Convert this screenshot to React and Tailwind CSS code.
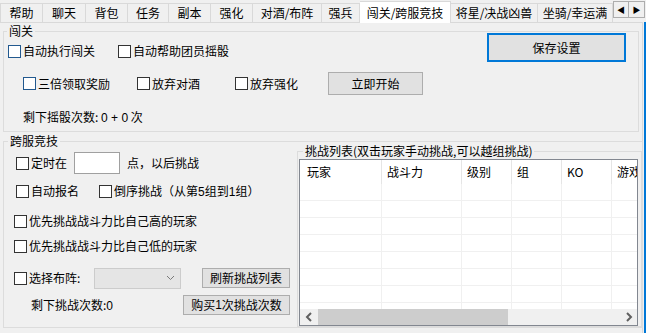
import React from "react";

const TABS = [
    { label: "帮助", w: "w-[43px]" },
    { label: "聊天", w: "w-[43px]" },
    { label: "背包", w: "w-[42px]" },
    { label: "任务", w: "w-[41px]" },
    { label: "副本", w: "w-[42px]" },
    { label: "强化", w: "w-[42px]" },
    { label: "对酒/布阵", w: "w-[69px]" },
    { label: "强兵", w: "w-[38px]" },
    { label: "闯关/跨服竞技", w: "w-[91px]", active: true },
    { label: "将星/决战凶兽", w: "w-[87px]" },
    { label: "坐骑/幸运满", w: "w-[75px]" },
];

const COLS = [
    { label: "玩家", w: "w-[82px]" },
    { label: "战斗力", w: "w-[80px]" },
    { label: "级别", w: "w-[50px]" },
    { label: "组", w: "w-[50px]" },
    { label: "KO", w: "w-[50px]" },
    { label: "游戏", w: "w-[50px]" },
];

function Check({ label, blue, className = "" }) {
    return (
        <div className={`flex items-center h-[16px] shrink-0 ${className}`}>
            <span
                className={`w-[13px] h-[13px] border bg-white shrink-0 ${
                    blue ? "border-[#22598f]" : "border-[#333333]"
                }`}
            />
            <span className="ml-[2px] whitespace-nowrap">{label}</span>
        </div>
    );
}

function Button({ children, className = "" }) {
    return (
        <div
            className={`flex items-center justify-center shrink-0 bg-[#e1e1e1] border border-[#adadad] whitespace-nowrap ${className}`}
        >
            {children}
        </div>
    );
}

function Chevron({ dir }) {
    return (
        <svg width="8" height="10" viewBox="0 0 8 10">
            <path
                d={dir === "left" ? "M6 1 L2 5 L6 9" : "M2 1 L6 5 L2 9"}
                fill="none"
                stroke="#606060"
                strokeWidth="2"
            />
        </svg>
    );
}

function ChallengeList() {
    return (
        <div className="ml-[1px] w-[339px] h-[167px] border border-[#828790] bg-white flex flex-col overflow-hidden">
            <div className="h-[24px] flex shrink-0">
                {COLS.map((c, i) => (
                    <div
                        key={c.label}
                        className={`${c.w} shrink-0 h-full flex items-center whitespace-nowrap overflow-hidden border-r border-[#e5e5e5] ${
                            i === 0 ? "pl-[7px]" : "pl-[5px]"
                        }`}
                    >
                        {c.label}
                    </div>
                ))}
            </div>
            <div className="flex-1 overflow-hidden">
                {Array.from({ length: 8 }).map((_, r) => (
                    <div key={r} className="h-[17px] flex border-b border-[#f0f0f0]">
                        {COLS.map((c) => (
                            <div key={c.label} className={`${c.w} shrink-0 h-full border-r border-[#f0f0f0]`} />
                        ))}
                    </div>
                ))}
            </div>
            <div className="h-[16px] flex bg-[#f0f0f0] shrink-0">
                <div className="w-[18px] flex items-center justify-center">
                    <Chevron dir="left" />
                </div>
                <div className="w-[190px] bg-[#cdcdcd]" />
                <div className="flex-1" />
                <div className="w-[17px] flex items-center justify-center">
                    <Chevron dir="right" />
                </div>
            </div>
        </div>
    );
}

export default function App() {
    return (
        <div className="w-[646px] h-[333px] bg-[#f0f0f0] overflow-hidden flex flex-col text-[12px] leading-[16px] text-black font-['Noto_Sans_CJK_SC','Microsoft_YaHei',sans-serif]">
            {/* tab strip */}
            <div className="h-[22px] flex items-end shrink-0 relative z-10">
                {TABS.map((tab, i) =>
                    tab.active ? (
                        <div
                            key={tab.label}
                            className={`${tab.w} h-[22px] mb-[-1px] bg-white border-t border-r border-[#d9d9d9] flex items-center justify-center whitespace-nowrap`}
                        >
                            {tab.label}
                        </div>
                    ) : (
                        <div
                            key={tab.label}
                            className={`${tab.w} h-[19px] bg-[#f0f0f0] border-t border-r border-[#d9d9d9] flex items-center justify-center whitespace-nowrap overflow-hidden ${
                                i === 0 ? "border-l" : ""
                            }`}
                        >
                            {tab.label}
                        </div>
                    )
                )}
                <div className="self-start mt-[1px] flex">
                    <div className="w-[16px] h-[17px] border border-[#adadad] bg-[#f0f0f0] flex items-center justify-center text-[8px]">
                        ◀
                    </div>
                    <div className="w-[16px] h-[17px] border border-l-0 border-[#adadad] bg-[#f0f0f0] flex items-center justify-center text-[8px]">
                        ▶
                    </div>
                </div>
            </div>

            <div className="flex flex-1">
                {/* tab page */}
                <div className="w-[643px] border-t border-r border-[#d9d9d9] flex flex-col">
                    {/* 闯关 */}
                    <fieldset className="ml-[3px] w-[636px] h-[109px] border border-[#dcdcdc]">
                        <legend className="ml-[3px] px-[2px]">闯关</legend>
                        <div className="h-[23px] flex items-start">
                            <Check blue label="自动执行闯关" className="ml-[4px] mt-[4px]" />
                            <Check label="自动帮助团员摇骰" className="ml-[23px] mt-[4px]" />
                            <div className="ml-auto mr-[12px] mt-[-6px] w-[139px] h-[29px] border-2 border-[#0078d7] bg-[#e1e1e1] flex items-center justify-center">
                                保存设置
                            </div>
                        </div>
                        <div className="mt-[10px] h-[23px] flex items-center">
                            <Check blue label="三倍领取奖励" className="ml-[19px]" />
                            <Check label="放弃对酒" className="ml-[27px]" />
                            <Check label="放弃强化" className="ml-[35px]" />
                            <Button className="ml-[30px] w-[95px] h-[23px]">立即开始</Button>
                        </div>
                        <div className="mt-[14px] ml-[19px]">
                            剩下摇骰次数: <span className="font-['Liberation_Sans',sans-serif]">0 + 0</span> 次
                        </div>
                    </fieldset>

                    {/* 跨服竞技 */}
                    <fieldset className="mt-[1px] ml-[3px] w-[640px] h-[195px] border border-[#dcdcdc]">
                        <legend className="ml-[4px] px-[2px]">跨服竞技</legend>
                        <div className="flex">
                            <div className="w-[293px] shrink-0 flex flex-col">
                                <div className="mt-[3px] h-[22px] flex items-center">
                                    <Check label="定时在" className="ml-[12px]" />
                                    <div className="ml-[7px] w-[46px] h-[22px] bg-white border border-[#a0a0a0]" />
                                    <span className="ml-[7px]">点，以后挑战</span>
                                </div>
                                <div className="mt-[9px] flex items-center">
                                    <Check label="自动报名" className="ml-[12px]" />
                                    <Check
                                        label={
                                            <>
                                                倒序挑战（从第<span className="font-['Liberation_Sans',sans-serif]">5</span>组到
                                                <span className="font-['Liberation_Sans',sans-serif]">1</span>组）
                                            </>
                                        }
                                        className="ml-[20px]"
                                    />
                                </div>
                                <Check label="优先挑战战斗力比自己高的玩家" className="mt-[14px] ml-[10px]" />
                                <Check label="优先挑战战斗力比自己低的玩家" className="mt-[9px] ml-[10px]" />
                                <div className="mt-[13px] h-[22px] flex items-center">
                                    <Check label="选择布阵:" className="ml-[10px]" />
                                    <div className="ml-[14px] w-[87px] h-[21px] bg-[#e5e5e5] border border-[#cccccc] flex items-center justify-end pr-[5px]">
                                        <svg width="9" height="6" viewBox="0 0 9 6">
                                            <path d="M1 1 L4.5 4.5 L8 1" fill="none" stroke="#7a7a7a" strokeWidth="1" />
                                        </svg>
                                    </div>
                                    <Button className="ml-auto mr-[7px] w-[88px] h-[20px]">刷新挑战列表</Button>
                                </div>
                                <div className="mt-[6px] h-[20px] flex items-center">
                                    <span className="ml-[27px]">
                                        剩下挑战次数:<span className="font-['Liberation_Sans',sans-serif]">0</span>
                                    </span>
                                    <Button className="ml-auto mr-[7px] w-[107px] h-[20px]">
                                        购买<span className="font-['Liberation_Sans',sans-serif]">1</span>次挑战次数
                                    </Button>
                                </div>
                            </div>

                            <fieldset className="flex-1 mt-[-6px] h-[184px] border border-[#dcdcdc]">
                                <legend className="ml-[5px] px-[2px]">
                                    挑战列表(双击玩家手动挑战,可以越组挑战)
                                </legend>
                                <ChallengeList />
                            </fieldset>
                        </div>
                    </fieldset>
                </div>
                <div className="ml-[1px] w-[2px] bg-[#0078d7]" />
            </div>
        </div>
    );
}
